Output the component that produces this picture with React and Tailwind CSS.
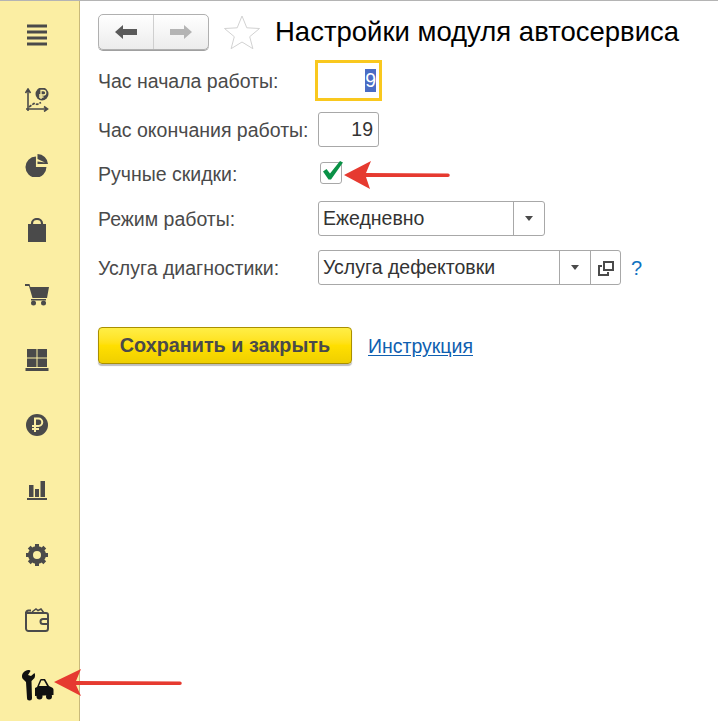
const MenuIcon = () => (
  <svg width="24" height="24" viewBox="0 0 24 24" fill="#4a4a4a">
    <rect x="2" y="1.500" width="20" height="3" />
    <rect x="2" y="7.500" width="20" height="3" />
    <rect x="2" y="13.500" width="20" height="3" />
    <rect x="2" y="19.500" width="20" height="3" />
  </svg>
);

const ChartIcon = () => (
  <svg width="24" height="24" viewBox="0 0 24 24" fill="none" stroke="#4a4a4a">
    <path d="M3 23V2M.5 5 3 1l2.500 4M1 21h21M19 18.500l3.500 2.500-3.500 2.500" strokeWidth="1.600" />
    <path d="M4 19l5-3.500 3 1 4-2" strokeWidth="1.600" strokeDasharray="3 1" />
    <circle cx="17" cy="6" r="6.500" fill="#4a4a4a" stroke="none" />
    <path d="M16 11V2.500h2.500a2 2 0 0 1 0 4.500H14M14 9h4.500" stroke="#fbeea3" strokeWidth="1.300" />
  </svg>
);

const PieIcon = () => (
  <svg width="24" height="24" viewBox="0 0 24 24" fill="#4a4a4a">
    <path d="M11 4v10h10A10 10 0 1 1 11 4Z" transform="translate(-.6 -.6) scale(1.050)" />
    <path d="M12.500 1A10.500 10.500 0 0 1 23 11H12.500V8.500L20 9.500 12.500 6Z" />
  </svg>
);

const BagIcon = () => (
  <svg width="24" height="24" viewBox="0 0 24 24" fill="#4a4a4a">
    <path d="M3 6h18v18H3Z" />
    <path d="M7 8V5.500a5 4.500 0 0 1 10 0V8" fill="none" stroke="#4a4a4a" strokeWidth="2.200" />
  </svg>
);

const CartIcon = () => (
  <svg width="24" height="24" viewBox="0 0 24 24" fill="#4a4a4a">
    <path d="M0 1h4.500l.8 3H24l-2 11H7.500L4 3H0Z" />
    <rect x="6" y="16" width="15" height="1.500" />
    <circle cx="8.500" cy="20" r="2.500" />
    <circle cx="18.500" cy="20" r="2.500" />
  </svg>
);

const TilesIcon = () => (
  <svg width="24" height="24" viewBox="0 0 24 24" fill="#4a4a4a">
    <rect x="2" y="1" width="9.500" height="8.500" />
    <rect x="12.500" y="1" width="9.500" height="8.500" />
    <rect x="2" y="10.500" width="9.500" height="8.500" />
    <rect x="12.500" y="10.500" width="9.500" height="8.500" />
    <rect x="0.500" y="20" width="23" height="3" />
  </svg>
);

const RubleIcon = () => (
  <svg width="24" height="24" viewBox="0 0 24 24" fill="none">
    <circle cx="12" cy="12" r="11" fill="#4a4a4a" />
    <path d="M10 19V5.500h3.500a3.700 3.700 0 0 1 0 7.500H7M7 16h7" stroke="#fbeea3" strokeWidth="2" />
  </svg>
);

const BarsIcon = () => (
  <svg width="24" height="24" viewBox="0 0 24 24" fill="#4a4a4a">
    <rect x="4" y="7" width="4.500" height="12" />
    <rect x="10" y="11" width="4" height="8" />
    <rect x="15.500" y="3" width="4.500" height="16" />
    <rect x="2" y="20" width="20" height="2" />
  </svg>
);

const GearIcon = () => (
  <svg width="24" height="24" viewBox="0 0 24 24" fill="none">
    <circle cx="12" cy="12" r="6.500" stroke="#4a4a4a" strokeWidth="5" />
    <path
      d="M12 1v22M1 12h22M4.200 4.200l15.600 15.600M19.800 4.200 4.200 19.800"
      stroke="#4a4a4a"
      strokeWidth="4"
      strokeDasharray="4.500 13 4.500"
    />
  </svg>
);

const WalletIcon = () => (
  <svg width="24" height="24" viewBox="0 0 24 24" fill="none" stroke="#4a4a4a" strokeWidth="2">
    <path d="M1 5a2.500 2.500 0 0 1 2.500-2.500H6M1 5v15.500A2.500 2.500 0 0 0 3.500 23h17a2.500 2.500 0 0 0 2.500-2.500V7a2 2 0 0 0-2-2H1Z" />
    <path d="M23 11h-5a2.500 2.500 0 0 0 0 5h5" />
    <path d="M7 4l4-3 2 1.500L16 1l3 4" strokeWidth="1.500" />
  </svg>
);

const ServiceIcon = () => (
  <svg width="34" height="32" viewBox="0 0 34 32" fill="#111">
    <path d="M8 1C3 2 1 6 2.500 9.500L6 13l1 16a2.500 2.500 0 0 0 5 0l-.5-17 3-3c.8-2 .8-3.500 0-5l-3.500 3-3-1 2.500-4C10 1 9 .8 8 1Z" />
    <path d="M15 27V19l2-1 3-7a1.500 1.500 0 0 1 1.500-1H25l4 7 3 1.500c1 .5 1.500 1.200 1.500 2.500v5Z" />
    <circle cx="19.500" cy="27.500" r="3" />
    <circle cx="29" cy="27.500" r="3" />
    <path d="M19 17l2.300-5.500H24l3 5.500Z" fill="#fbeea3" />
  </svg>
);

const menuIcons = [
  MenuIcon,
  ChartIcon,
  PieIcon,
  BagIcon,
  CartIcon,
  TilesIcon,
  RubleIcon,
  BarsIcon,
  GearIcon,
  WalletIcon,
  ServiceIcon,
];

const Caret = () => (
  <span className="h-0 w-0 border-x-[4px] border-t-[5px] border-x-transparent border-t-[#4a4a4a]" />
);

const Row = ({ label, top, children }) => (
  <div className={`flex items-center ${top}`}>
    <span className="w-[220px] shrink-0 pt-[3px] text-[19.500px] leading-none text-[#4a4a4a]">{label}</span>
    {children}
  </div>
);

const App = () => (
  <div
    className="relative flex h-[721px] w-[718px] overflow-hidden border-t border-[#b4b4b4] bg-white"
    style={{ fontFamily: '"Liberation Sans", Arial, sans-serif' }}
  >
    <aside className="flex h-full w-[80px] shrink-0 flex-col border-r border-[#c9b97a] bg-[#fbeea3] pt-[1px]">
      {menuIcons.map((Icon, index) => (
        <div key={index} className="flex h-[65px] shrink-0 items-center justify-center pr-[6px]">
          <Icon />
        </div>
      ))}
    </aside>

    <main className="flex-1 pl-[18px] pt-[13px]">
      <div className="flex items-center">
        <div className="flex h-[36px] w-[111px] rounded-[5px] border border-[#b0b0b0] bg-gradient-to-b from-white to-[#ececec] shadow-[0_1px_0_#a0a0a0]">
          <div className="flex flex-1 items-center justify-center border-r border-[#cfcfcf]">
            <svg width="22" height="14" viewBox="0 0 22 14" fill="#5a5a5a">
              <path d="M0 7 8 0v4h14v6H8v4Z" />
            </svg>
          </div>
          <div className="flex flex-1 items-center justify-center">
            <svg width="22" height="14" viewBox="0 0 22 14" fill="#b4b4b4">
              <path d="M22 7 14 0v4H0v6h14v4Z" />
            </svg>
          </div>
        </div>
        <svg className="ml-[15px]" width="36" height="34" viewBox="0 0 36 34" fill="none" stroke="#d2d2d2" strokeWidth="1">
          <path d="M18 1l4.800 11.800L35.500 13.500l-9.800 8.200 3.200 12L18 27l-10.900 6.700 3.200-12L.5 13.500l12.700-.7Z" />
        </svg>
        <h1 className="ml-[15px] whitespace-nowrap text-[27.500px] font-normal leading-none text-black">
          Настройки модуля автосервиса
        </h1>
      </div>

      <Row label="Час начала работы:" top="mt-[10px]">
        <div className="-ml-[3px] flex h-[41px] w-[67px] items-center justify-end border-[3px] border-[#f9c81e] pr-[3px] text-[19.500px]">
          <span className="bg-[#4a6cc4] leading-[23px] text-white">9</span>
        </div>
      </Row>

      <Row label="Час окончания работы:" top="mt-[11px]">
        <div className="flex h-[35px] w-[61px] items-center justify-end rounded-[3px] border border-[#a8a8a8] pr-[5px] text-[19.500px] text-[#333]">
          19
        </div>
      </Row>

      <Row label="Ручные скидки:" top="mt-[15px]">
        <div className="ml-[2px] h-[22px] w-[22px] rounded-[3px] border border-[#a8a8a8]">
          <svg className="-mt-[2px] ml-[2px] overflow-visible" width="20" height="20" viewBox="0 0 20 20" fill="#0a9146">
            <path d="M0 10.500 3.500 8 7 12.500 17 0l3 1.500L8 18.500H5.500Z" />
          </svg>
        </div>
      </Row>

      <Row label="Режим работы:" top="mt-[16.500px]">
        <div className="flex h-[35px] w-[227px] rounded-[3px] border border-[#a8a8a8] text-[19.500px] text-[#333]">
          <span className="flex flex-1 items-center pl-[4px] pt-[1px]">Ежедневно</span>
          <span className="flex w-[31px] items-center justify-center border-l border-[#a8a8a8]">
            <Caret />
          </span>
        </div>
      </Row>

      <Row label="Услуга диагностики:" top="mt-[14px]">
        <div className="flex h-[35px] w-[303px] rounded-[3px] border border-[#a8a8a8] text-[19.500px] text-[#333]">
          <span className="flex flex-1 items-center pl-[4px] pt-[1px]">Услуга дефектовки</span>
          <span className="flex w-[31px] items-center justify-center border-l border-[#a8a8a8]">
            <Caret />
          </span>
          <span className="flex w-[30px] items-center justify-center border-l border-[#a8a8a8]">
            <svg width="16" height="16" viewBox="0 0 16 16" fill="none" stroke="#4a4a4a" strokeWidth="2">
              <rect x="6" y="2" width="9" height="8" />
              <path d="M4 6H1v9h9v-3" />
            </svg>
          </span>
        </div>
        <span className="ml-[10px] text-[20px] leading-none text-[#0f72c0]">?</span>
      </Row>

      <div className="mt-[42px] flex items-center">
        <button className="h-[37px] w-[254px] rounded-[4px] border border-[#a98f00] bg-gradient-to-b from-[#ffee45] via-[#ffdf00] to-[#efcf00] pt-[1px] text-[19.800px] font-bold text-[#4a4a4a] shadow-[0_2px_1px_#bdbdbd]">
          Сохранить и закрыть
        </button>
        <a href="#" className="ml-[16px] mt-[3px] text-[19.500px] leading-none text-[#0f5fb0] underline underline-offset-2">
          Инструкция
        </a>
      </div>
    </main>

    <svg className="pointer-events-none absolute left-0 top-0" width="718" height="721" fill="#e63a30">
      <path d="M344 174 371 160 366 172 448 172.500a1.500 1.500 0 0 1 0 3.500L366 176 370 188Z" />
      <path d="M54 681 81 668 76 680 180 680.500a1.500 1.500 0 0 1 0 3.500L76 684 81 695Z" />
    </svg>
  </div>
);

export default App;
